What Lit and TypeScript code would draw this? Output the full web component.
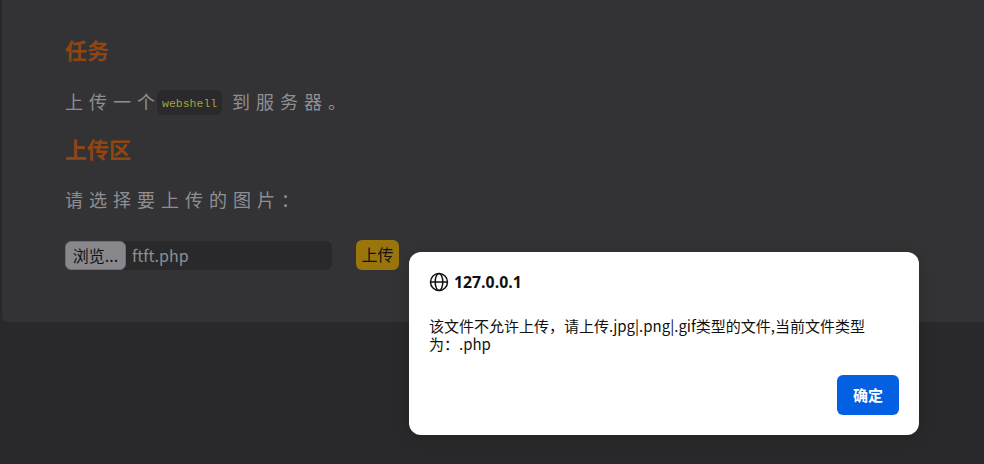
import { LitElement, html, css } from "lit";
import { customElement } from "lit/decorators.js";

@customElement("app-root")
export class AppRoot extends LitElement {
  static styles = css`
    :host {
      display: block;
      width: 984px;
      height: 464px;
      position: relative;
      overflow: hidden;
      background: #29292b;
      font-family: "Noto Sans CJK SC", "Liberation Sans", sans-serif;
    }
    .panel {
      box-sizing: border-box;
      margin-left: 2px;
      margin-right: -10px;
      margin-top: -6px;
      height: 328px;
      padding: 39px 63px 0;
      background: #333335;
      border-radius: 6px;
    }
    h2 {
      margin: 0;
      font-size: 22px;
      line-height: 32px;
      font-weight: 700;
      color: #8f4613;
    }
    p {
      margin: 0;
      font-size: 18px;
      line-height: 28px;
      letter-spacing: 6px;
      color: #8f8f93;
      display: flex;
      align-items: center;
    }
    .task { margin-top: 22px; height: 28px; }
    .up { margin-top: 17px; }
    .choose { margin-top: 21px; }
    code {
      font-family: "Liberation Mono", monospace;
      font-size: 11.5px;
      font-weight: 400;
      letter-spacing: 0;
      color: #a3a33a;
      background: #2a2a2c;
      border-radius: 6px;
      padding: 0 5px;
      height: 25px;
      line-height: 27px;
      width: 55px;
      display: inline-block;
      margin: 2px 10px 0 -4px;
    }
    form {
      display: flex;
      align-items: center;
      margin-top: 27px;
    }
    .file {
      display: flex;
      align-items: center;
      width: 267px;
      height: 29px;
      background: #29292b;
      border-radius: 6px;
      font-size: 16px;
      color: #8f8f93;
    }
    .browse {
      box-sizing: border-box;
      width: 61px;
      height: 29px;
      background: #87878c;
      border: 1px solid #6f6f74;
      border-radius: 6px;
      color: #111;
      text-align: center;
      line-height: 26px;
      font-size: 16px;
      margin-right: 6px;
    }
    .send {
      box-sizing: border-box;
      margin-left: 24px;
      width: 43px;
      height: 30px;
      background: #99750b;
      border-radius: 6px;
      color: #111;
      text-align: center;
      line-height: 28px;
      font-size: 16px;
    }
    .dialog {
      position: absolute;
      left: 409px;
      top: 252px;
      box-sizing: border-box;
      width: 510px;
      height: 183px;
      padding: 20px;
      background: #fff;
      border-radius: 12px;
      color: #111;
      display: flex;
      flex-direction: column;
      box-shadow: 0 2px 16px rgba(0, 0, 0, 0.15);
    }
    .origin {
      display: flex;
      align-items: center;
      gap: 5px;
      height: 20px;
      font-size: 15.8px;
      font-weight: 700;
      font-family: "Open Sans", "Noto Sans CJK SC", sans-serif;
    }
    .origin svg { display: block; }
    .msg {
      margin-top: 25px;
      width: 445px;
      font-size: 15px;
      line-height: 18px;
    }
    .row {
      margin-top: auto;
      display: flex;
      justify-content: flex-end;
    }
    .ok {
      width: 62px;
      height: 40px;
      background: #0360e2;
      border-radius: 6px;
      color: #fff;
      font-size: 15px;
      font-weight: 700;
      text-align: center;
      line-height: 40px;
    }
  `;

  render() {
    return html`
      <div class="panel">
        <h2>任务</h2>
        <p class="task">上传一个<code>webshell</code>到服务器。</p>
        <h2 class="up">上传区</h2>
        <p class="choose">请选择要上传的图片：</p>
        <form>
          <div class="file"><span class="browse">浏览...</span>ftft.php</div>
          <div class="send">上传</div>
        </form>
      </div>
      <div class="dialog">
        <div class="origin">
          <svg width="20" height="20" viewBox="0 0 20 20" fill="none" stroke="#111" stroke-width="1.5">
            <circle cx="10" cy="10" r="8.5"></circle>
            <ellipse cx="10" cy="10" rx="3.8" ry="8.5"></ellipse>
            <path d="M1.5 10h17"></path>
          </svg>
          <span>127.0.0.1</span>
        </div>
        <div class="msg">该文件不允许上传，请上传.jpg|.png|.gif类型的文件,当前文件类型为：.php</div>
        <div class="row"><div class="ok">确定</div></div>
      </div>
    `;
  }
}
